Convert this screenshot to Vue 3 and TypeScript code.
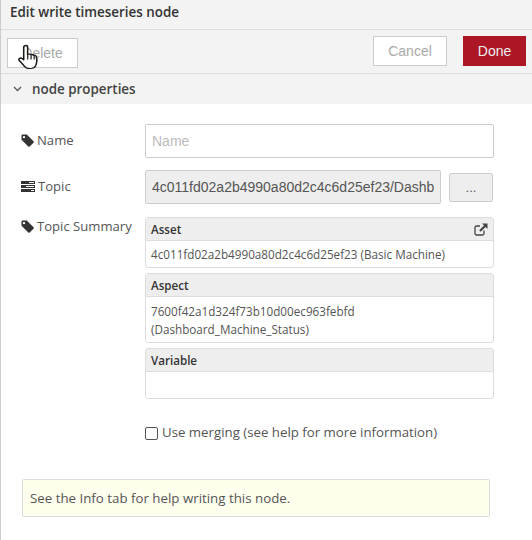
<template>
  <div class="tray">
    <header class="tray-title">Edit write timeseries node</header>

    <div class="tray-toolbar">
      <button class="btn btn-delete">Delete</button>
      <div class="toolbar-right">
        <button class="btn btn-cancel">Cancel</button>
        <button class="btn btn-done">Done</button>
      </div>
      <!-- mouse pointer caught in the screenshot -->
      <svg class="pointer" width="22" height="26" viewBox="0 0 18.500 26" preserveAspectRatio="none">
        <path
          d="M6.500 1.500c1 0 1.600.7 1.600 1.700v7.200l.6-.2c.8-.2 1.600 0 2 .5.800-.4 1.800-.2 2.300.6.900-.4 1.900 0 2.300.9.600 2 .6 5 .2 7.300-.3 1.800-1 3-1.800 4-1.800 1.200-5 1.200-6.800.3-1-.6-2-2-3-3.600L1.400 17c-.8-1-.9-2-.2-2.600.7-.6 1.700-.4 2.600.4l1 1V3.200c0-1 .7-1.700 1.700-1.700Z"
          fill="#fff"
          stroke="#1a1a1a"
          stroke-width="1.300"
          stroke-linejoin="round"
        />
        <path d="M8.200 10.500v5M11 10.500v5M13.600 11.500v4" stroke="#1a1a1a" stroke-width="1" fill="none" />
      </svg>
    </div>

    <div class="section-header">
      <svg class="chevron" width="9" height="6" viewBox="0 0 9 6">
        <path d="M1 1l3.500 3.500L8 1" fill="none" stroke="#555" stroke-width="1.300" />
      </svg>
      <span>node properties</span>
    </div>

    <div class="form">
      <div class="form-row row-name">
        <label class="row-label">
          <svg class="tag" width="13" height="13" viewBox="0 0 13 13">
            <path d="M0.500 1.500A1 1 0 0 1 1.500.5h4.300l6.700 6.800a1 1 0 0 1 0 1.400l-3.800 3.800a1 1 0 0 1-1.400 0L.5 5.800ZM3 4.300a1.200 1.200 0 1 0 0-2.400 1.200 1.200 0 0 0 0 2.400Z" fill="#333" fill-rule="evenodd" />
          </svg>
          Name
        </label>
        <input class="text-input grow" type="text" placeholder="Name" />
      </div>

      <div class="form-row row-topic">
        <label class="row-label">
          <svg class="tasks" width="14" height="11" viewBox="0 0 14 11">
            <path d="M0 0h14v3H0ZM0 4h14v3H0ZM0 8h14v3H0Z" fill="#333" />
            <path d="M8 1h5v1H8ZM5 5h8v1H5ZM10 9h3v1h-3Z" fill="#fff" />
          </svg>
          Topic
        </label>
        <input class="text-input topic-input" type="text" disabled :value="topic" />
        <button class="btn-browse">...</button>
      </div>

      <div class="form-row row-summary">
        <label class="row-label label-summary">
          <svg class="tag" width="13" height="13" viewBox="0 0 13 13">
            <path d="M0.500 1.500A1 1 0 0 1 1.500.5h4.300l6.700 6.800a1 1 0 0 1 0 1.400l-3.800 3.800a1 1 0 0 1-1.400 0L.5 5.800ZM3 4.300a1.200 1.200 0 1 0 0-2.400 1.200 1.200 0 0 0 0 2.400Z" fill="#333" fill-rule="evenodd" />
          </svg>
          Topic Summary
        </label>
        <div class="summary">
          <div v-for="box in summary" :key="box.title" class="box">
            <div class="box-head">
              <span>{{ box.title }}</span>
              <svg v-if="box.link" width="14" height="13" viewBox="0 0 14 13">
                <path d="M10 7.500v3a1.500 1.500 0 0 1-1.500 1.500h-6A1.500 1.500 0 0 1 1 10.500v-6A1.500 1.500 0 0 1 2.500 3H6" fill="none" stroke="#444" stroke-width="1.300" />
                <path d="M8 .5h5.500V6l-2-2-4.800 4.800-1.500-1.500L10 2.500Z" fill="#444" />
              </svg>
            </div>
            <div class="box-body" :class="{ tall: box.lines.length > 1 }">
              <div v-for="line in box.lines" :key="line">{{ line }}</div>
            </div>
          </div>
        </div>
      </div>

      <label class="merge">
        <input type="checkbox" class="merge-check" />
        <span>Use merging (see help for more information)</span>
      </label>

      <div class="tip">See the Info tab for help writing this node.</div>
    </div>
  </div>
</template>

<script setup lang="ts">
interface SummaryBox {
  title: string
  lines: string[]
  link?: boolean
}

const topic = '4c011fd02a2b4990a80d2c4c6d25ef23/Dashboard_Machine_Status'

const summary: SummaryBox[] = [
  { title: 'Asset', lines: ['4c011fd02a2b4990a80d2c4c6d25ef23 (Basic Machine)'], link: true },
  { title: 'Aspect', lines: ['7600f42a1d324f73b10d00ec963febfd', '(Dashboard_Machine_Status)'] },
  { title: 'Variable', lines: [] },
]
</script>

<style>
html,
body {
  margin: 0;
  background: #fff;
}
</style>

<style scoped>
.tray {
  width: 532px;
  height: 540px;
  box-sizing: border-box;
  border-left: 1px solid #ccc;
  overflow: hidden;
  font-family: 'Open Sans', 'Noto Sans', sans-serif;
  color: #555;
  background: #fff;
}

.tray-title {
  height: 30px;
  box-sizing: border-box;
  padding: 3px 0 0 9px;
  font-size: 13.4px;
  line-height: 18px;
  font-weight: 600;
  color: #333;
  background: #f3f3f3;
  border-bottom: 1px solid #ddd;
}

.tray-toolbar {
  position: relative;
  height: 44px;
  box-sizing: border-box;
  display: flex;
  justify-content: space-between;
  padding: 7px 6px 0 6px;
  background: #f3f3f3;
  border-bottom: 1px solid #ddd;
}

.toolbar-right {
  display: flex;
  gap: 16px;
  margin-top: -1px;
}

.btn {
  width: 71px;
  height: 30px;
  box-sizing: border-box;
  font-family: 'Liberation Sans', Arial, sans-serif;
  font-size: 14px;
  padding: 0;
  background: #fff;
  border: 1px solid #ccc;
  color: #aaa;
}

.btn-delete {
  margin-top: 1px;
}

.btn-cancel {
  width: 74px;
}

.btn-done {
  width: 63px;
  background: #ad1625;
  border-color: #ad1625;
  color: #eee;
}

.pointer {
  position: absolute;
  left: 17px;
  top: 14px;
}

.section-header {
  height: 30px;
  display: flex;
  align-items: center;
  background: #f3f3f3;
  font-size: 13.4px;
  font-weight: 600;
  color: #444;
}

.chevron {
  margin: 0 10px 0 12px;
}

.form {
  padding: 20px 0 0 20px;
}

.form-row {
  display: flex;
}

.row-name {
  align-items: center;
  margin-bottom: 12px;
}

.row-topic {
  align-items: center;
  margin-bottom: 13px;
}

.row-label {
  width: 124px;
  flex: none;
  box-sizing: border-box;
  padding-bottom: 2px;
  display: flex;
  align-items: center;
  gap: 3px;
  font-size: 13.1px;
  line-height: 18px;
  color: #555;
}

.label-summary {
  align-self: flex-start;
  padding-bottom: 0;
}

.text-input {
  height: 34px;
  box-sizing: border-box;
  padding: 0 6px;
  font-family: 'Liberation Sans', Arial, sans-serif;
  font-size: 14px;
  color: #555;
  background: #fff;
  border: 1px solid #ccc;
  border-radius: 2px;
  outline: none;
}

.text-input::placeholder {
  color: #bbb;
}

.grow {
  width: 349px;
}

.topic-input {
  width: 296px;
  background: #eee;
}

.btn-browse {
  width: 44px;
  height: 29px;
  margin-left: 8px;
  padding: 0;
  box-sizing: border-box;
  font-family: 'Liberation Sans', Arial, sans-serif;
  font-size: 13px;
  color: #555;
  background: #eee;
  border: 1px solid #ccc;
  border-radius: 2px;
}

.summary {
  display: flex;
  flex-direction: column;
  gap: 5px;
  width: 349px;
}

.box {
  box-sizing: border-box;
  border: 1px solid #ddd;
  border-radius: 3px;
  overflow: hidden;
}

.box-head {
  height: 23px;
  box-sizing: border-box;
  display: flex;
  align-items: center;
  justify-content: space-between;
  padding: 0 5px;
  font-size: 11.6px;
  font-weight: 600;
  color: #333;
  background: #eee;
  border-bottom: 1px solid #ddd;
}

.box-body {
  min-height: 26px;
  box-sizing: border-box;
  padding: 4px 5px;
  font-size: 11.7px;
  line-height: 18px;
  color: #555;
}

.box-body.tall {
  padding-top: 5px;
}

.merge {
  display: flex;
  align-items: center;
  gap: 4px;
  margin: 24px 0 0 124px;
  font-size: 13.25px;
  line-height: 18px;
  color: #555;
}

.merge-check {
  appearance: none;
  width: 13px;
  height: 13px;
  margin: 3px 0 0;
  box-sizing: border-box;
  background: #fff;
  border: 1px solid #555;
  border-radius: 2px;
}

.tip {
  width: 468px;
  height: 38px;
  box-sizing: border-box;
  margin: 38px 0 0 1px;
  padding: 0 7px;
  display: flex;
  align-items: center;
  font-size: 13.3px;
  color: #555;
  background: #ffe;
  border: 1px solid #ddd;
  border-radius: 2px;
}
</style>
